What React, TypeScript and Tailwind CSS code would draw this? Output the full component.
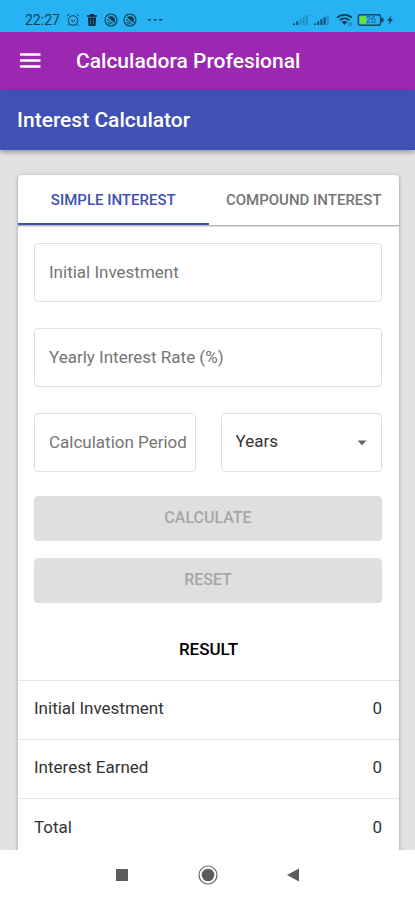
import { useState } from "react";
import type { FormEvent } from "react";

const UNITS = ["Years", "Months", "Days"];
const UNITS_PER_YEAR: Record<string, number> = { Years: 1, Months: 12, Days: 365 };
const EMPTY_RESULT = { investment: 0, interest: 0, total: 0 };

const fieldClass =
  "h-[59px] w-full min-w-0 rounded border border-[#dfdfdf] bg-white pb-0.5 pl-3.5 text-[17px] text-[#333] outline-none placeholder:text-[#757575] placeholder:opacity-100 focus:border-[#3f51b5]";

const buttonClass =
  "h-[45px] w-full rounded bg-[#3f51b5] pb-0.5 text-base font-medium uppercase text-white disabled:bg-[#dfdfdf] disabled:text-[#a6a6a6]";

function SignalIcon({ level }: { level: number }) {
  return (
    <svg width="17" height="12" viewBox="0 0 17 12" aria-hidden="true">
      {[0, 1, 2, 3, 4].map((i) => (
        <rect
          key={i}
          x={1 + i * 3.2}
          y={9.4 - i * 2.1}
          width="2"
          height={1.6 + i * 2.1}
          fill="#123c52"
          opacity={i < level ? 0.85 : 0.3}
        />
      ))}
    </svg>
  );
}

function AppBadgeIcon() {
  return (
    <svg width="14" height="14" viewBox="0 0 14 14" fill="none" stroke="#123c52" aria-hidden="true">
      <circle cx="7" cy="7" r="6" strokeWidth="1.1" />
      <path d="M4.2 4.4C6 3 9 3.2 10.4 5.2L10.8 9.8Z" fill="#123c52" strokeWidth=".6" />
      <path d="M3 6.2 8.6 10.8M3.4 9C4.4 10.4 5.6 11 7 11" strokeWidth="1" />
    </svg>
  );
}

function StatusBar() {
  return (
    <div className="flex h-8 shrink-0 items-end justify-between bg-[#27b2f3] pr-[21px] pb-[5px] pl-[25px] text-[#123c52]">
      <div className="flex items-center gap-[5px]">
        <span className="text-sm leading-[14px]">22:27</span>
        <svg className="ml-px" width="14" height="14" viewBox="0 0 14 14" fill="none" stroke="currentColor" aria-hidden="true">
          <circle cx="7" cy="7.5" r="4.8" />
          <path d="M4.8 6.8 7 8.6 9.3 6.8M1 3.2 3.4 1.2M13 3.2 10.6 1.2M3.3 11.2 2 12.8M10.7 11.2 12 12.8" />
        </svg>
        <svg width="14" height="14" viewBox="0 0 14 14" fill="#0b2533" aria-hidden="true">
          <path d="M2 2.2H5V1H9V2.2H12V3.8H2ZM3 4.6H11L10.5 13H3.5Z" />
          <path d="M5.7 6V11.6M8.3 6V11.6" stroke="#27b2f3" strokeWidth=".6" />
        </svg>
        <AppBadgeIcon />
        <AppBadgeIcon />
        <svg className="ml-1.5" width="16" height="14" viewBox="0 0 16 14" fill="currentColor" aria-hidden="true">
          <rect x="0" y="6" width="3" height="1.5" />
          <rect x="5.6" y="6" width="3" height="1.5" />
          <rect x="11.2" y="6" width="3" height="1.5" />
        </svg>
      </div>
      <div className="flex items-center gap-1">
        <SignalIcon level={2} />
        <SignalIcon level={4} />
        <svg className="ml-0.5" width="17" height="14" viewBox="0 0 17 14" fill="none" stroke="currentColor" aria-hidden="true">
          <path d="M1 4.6C5 .9 12 .9 16 4.6M3.6 7.2C6.3 4.8 10.7 4.8 13.4 7.2" strokeWidth="1.7" />
          <path d="M5.6 9C7.2 7.6 9.8 7.6 11.4 9L8.5 12Z" fill="currentColor" stroke="none" />
          <path d="M13 9.5V13M15.2 9.5V13" opacity=".6" />
        </svg>
        <svg width="37" height="14" viewBox="0 0 37 14" aria-hidden="true">
          <rect x="1.2" y="1.7" width="22.4" height="10.6" rx="2.4" fill="none" stroke="#174a60" strokeWidth="1.4" />
          <path d="M24.2 4.2 26.6 5.6V8.4L24.2 9.8Z" fill="#174a60" />
          <rect x="2.8" y="3.2" width="6.4" height="7.6" fill="#6fe03a" />
          <text x="9" y="10" fontSize="9" fill="#174a60" fillOpacity=".8">26</text>
          <path d="M34.5 2.2 30.2 7.8H32.8L31.4 12 36 6.2H33.4Z" fill="#123c52" />
        </svg>
      </div>
    </div>
  );
}

function NavigationBar() {
  return (
    <nav aria-label="System" className="flex h-[50px] shrink-0 items-center justify-center gap-[62px] bg-white">
      <button type="button" aria-label="Recent apps">
        <svg width="24" height="24" viewBox="0 0 24 24" aria-hidden="true">
          <rect x="6" y="6" width="12" height="12" fill="#5c5c5c" />
        </svg>
      </button>
      <button type="button" aria-label="Home">
        <svg width="24" height="24" viewBox="0 0 24 24" aria-hidden="true">
          <circle cx="12" cy="12" r="9" fill="none" stroke="#666" strokeWidth="1.2" />
          <circle cx="12" cy="12" r="6.3" fill="#5c5c5c" />
        </svg>
      </button>
      <button type="button" aria-label="Back">
        <svg width="24" height="24" viewBox="0 0 24 24" aria-hidden="true">
          <path d="M5 12 17 5.5V18.5Z" fill="#5c5c5c" />
        </svg>
      </button>
    </nav>
  );
}

export default function App() {
  const [tab, setTab] = useState<"simple" | "compound">("simple");
  const [investment, setInvestment] = useState("");
  const [rate, setRate] = useState("");
  const [period, setPeriod] = useState("");
  const [unit, setUnit] = useState("Years");
  const [result, setResult] = useState(EMPTY_RESULT);

  const handleSubmit = (e: FormEvent) => {
    e.preventDefault();
    const principal = Number(investment);
    const years = Number(period) / UNITS_PER_YEAR[unit];
    const r = Number(rate) / 100;
    const interest = tab === "simple" ? principal * r * years : principal * ((1 + r) ** years - 1);
    setResult({ investment: principal, interest, total: principal + interest });
  };

  const handleReset = () => {
    setInvestment("");
    setRate("");
    setPeriod("");
    setResult(EMPTY_RESULT);
  };

  const tabs = [
    { id: "simple", label: "Simple Interest" },
    { id: "compound", label: "Compound Interest" },
  ] as const;

  const rows = [
    { label: "Initial Investment", value: result.investment },
    { label: "Interest Earned", value: result.interest },
    { label: "Total", value: result.total },
  ];

  return (
    <div className="flex h-dvh flex-col bg-[#e2e2e2] font-[Roboto,sans-serif]">
      <StatusBar />
      <header className="flex h-[58px] shrink-0 items-center gap-[35px] bg-[#9c27b0] px-[19px] text-white">
        <button type="button" aria-label="Open menu">
          <svg width="22" height="22" viewBox="0 0 22 22" fill="currentColor" aria-hidden="true">
            <path d="M1 3.2H21.5V5.7H1ZM1 9.2H21.5V11.7H1ZM1 15.2H21.5V17.7H1Z" />
          </svg>
        </button>
        <h1 className="text-[21px] leading-7 font-medium">Calculadora Profesional</h1>
      </header>
      <div className="z-10 flex h-[60px] shrink-0 items-center bg-[#3f51b5] px-[17px] text-white shadow-[0_2px_5px_rgba(0,0,0,0.35)]">
        <h2 className="text-[21px] leading-7 font-medium">Interest Calculator</h2>
      </div>

      <main className="min-h-0 flex-1 overflow-y-auto pt-[25px] pr-4 pl-[18px] [scrollbar-width:none]">
        <div className="rounded-sm bg-white shadow-[0_1px_4px_rgba(0,0,0,0.3)]">
          <div role="tablist" className="grid grid-cols-2 border-b border-[#b5b5b5] shadow-[0_1px_1px_rgba(0,0,0,0.12)]">
            {tabs.map(({ id, label }) => (
              <button
                key={id}
                type="button"
                role="tab"
                aria-selected={tab === id}
                onClick={() => setTab(id)}
                className={`h-[50px] border-b-2 pt-0.5 text-[15px] font-medium whitespace-nowrap uppercase ${
                  tab === id ? "border-[#3f51b5] text-[#3f51b5]" : "border-transparent text-[#757575]"
                }`}
              >
                {label}
              </button>
            ))}
          </div>

          <form onSubmit={handleSubmit} className="pt-[17px] pr-[17px] pl-4">
            <div className="flex flex-col gap-[26px]">
              <input
                aria-label="Initial Investment"
                placeholder="Initial Investment"
                inputMode="decimal"
                value={investment}
                onChange={(e) => setInvestment(e.target.value)}
                className={fieldClass}
              />
              <input
                aria-label="Yearly Interest Rate (%)"
                placeholder="Yearly Interest Rate (%)"
                inputMode="decimal"
                value={rate}
                onChange={(e) => setRate(e.target.value)}
                className={fieldClass}
              />
              <div className="grid grid-cols-2 gap-[25px]">
                <input
                  aria-label="Calculation Period"
                  placeholder="Calculation Period"
                  inputMode="decimal"
                  value={period}
                  onChange={(e) => setPeriod(e.target.value)}
                  className={fieldClass}
                />
                <div className="relative">
                  <select
                    aria-label="Period unit"
                    value={unit}
                    onChange={(e) => setUnit(e.target.value)}
                    className={`${fieldClass} appearance-none`}
                  >
                    {UNITS.map((u) => (
                      <option key={u}>{u}</option>
                    ))}
                  </select>
                  <svg
                    className="pointer-events-none absolute top-1/2 right-3.5 -translate-y-1/2"
                    width="12"
                    height="6"
                    viewBox="0 0 12 6"
                    aria-hidden="true"
                  >
                    <path d="M1.5 .5H10.5L6 5.2Z" fill="#666" />
                  </svg>
                </div>
              </div>
            </div>
            <div className="mt-6 flex flex-col gap-[17px]">
              <button type="submit" disabled={!investment || !rate || !period} className={buttonClass}>
                Calculate
              </button>
              <button type="button" disabled={!investment && !rate && !period} onClick={handleReset} className={buttonClass}>
                Reset
              </button>
            </div>
          </form>

          <table className="mt-4 w-full text-[17px] text-[#333]">
            <caption className="text-center leading-[61px] font-medium text-black uppercase">Result</caption>
            <tbody>
              {rows.map((row) => (
                <tr key={row.label} className="h-[59px] border-t border-[#e6e6e6]">
                  <th scope="row" className="pb-0.5 pl-4 text-left font-normal">
                    {row.label}
                  </th>
                  <td className="pr-[17px] pb-0.5 text-right">{row.value}</td>
                </tr>
              ))}
            </tbody>
          </table>
        </div>
      </main>
      <NavigationBar />
    </div>
  );
}
